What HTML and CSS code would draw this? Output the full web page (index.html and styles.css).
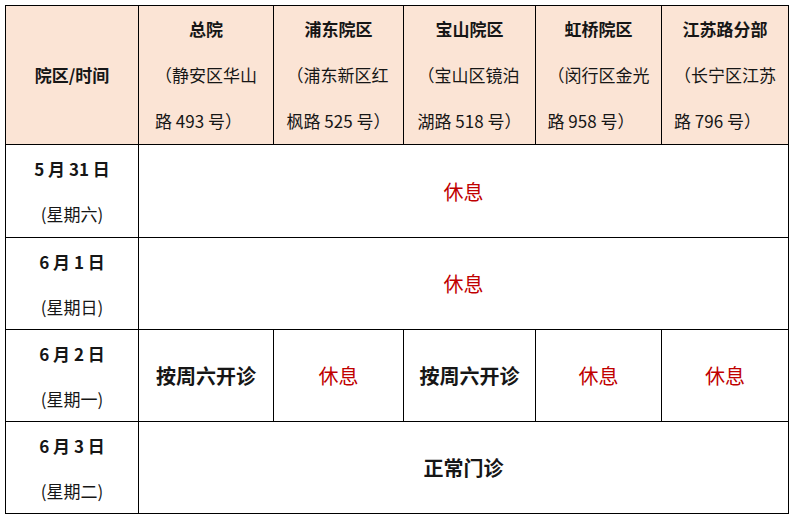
FILE: index.html
```html
<!DOCTYPE html>
<html lang="zh-CN">
<head>
<meta charset="utf-8">
<title>院区门诊安排</title>
<link rel="stylesheet" href="styles.css">
</head>
<body>
<table class="schedule">
  <colgroup>
    <col class="c0"><col class="c1"><col class="c2"><col class="c3"><col class="c4"><col class="c5">
  </colgroup>
  <tr class="head">
    <th class="corner">院区/时间</th>
    <th><div class="name">总院</div><div class="addr">（静安区华山<br>路 493 号）</div></th>
    <th><div class="name">浦东院区</div><div class="addr">（浦东新区红<br>枫路 525 号）</div></th>
    <th><div class="name">宝山院区</div><div class="addr">（宝山区镜泊<br>湖路 518 号）</div></th>
    <th><div class="name">虹桥院区</div><div class="addr">（闵行区金光<br>路 958 号）</div></th>
    <th><div class="name">江苏路分部</div><div class="addr">（长宁区江苏<br>路 796 号）</div></th>
  </tr>
  <tr class="row first">
    <td class="date"><div class="d">5 月 31 日</div><div class="w">(星期六)</div></td>
    <td colspan="5" class="rest">休息</td>
  </tr>
  <tr class="row">
    <td class="date"><div class="d">6 月 1 日</div><div class="w">(星期日)</div></td>
    <td colspan="5" class="rest">休息</td>
  </tr>
  <tr class="row">
    <td class="date"><div class="d">6 月 2 日</div><div class="w">(星期一)</div></td>
    <td class="open">按周六开诊</td>
    <td class="rest">休息</td>
    <td class="open">按周六开诊</td>
    <td class="rest">休息</td>
    <td class="rest">休息</td>
  </tr>
  <tr class="row">
    <td class="date"><div class="d">6 月 3 日</div><div class="w">(星期二)</div></td>
    <td colspan="5" class="open">正常门诊</td>
  </tr>
</table>
</body>
</html>
```

FILE: styles.css
```css
html, body {
  margin: 0;
  padding: 0;
  background: #ffffff;
}
body {
  padding: 5px 0 0 5px;
  font-family: "Noto Sans CJK SC", "Noto Sans", sans-serif;
  color: #161616;
}
.schedule {
  border-collapse: collapse;
  table-layout: fixed;
  width: 783px;
}
.c0 { width: 133px; }
.c1 { width: 135px; }
.c2 { width: 130px; }
.c3 { width: 132px; }
.c4 { width: 126px; }
.c5 { width: 127px; }

.schedule th,
.schedule td {
  border: 1px solid #000;
  padding: 0;
  text-align: center;
  vertical-align: middle;
}
.head th {
  background: #fbe4d5;
  height: 138px;
  font-size: 17px;
  line-height: 46px;
}
.corner {
  font-weight: 700;
}
.name {
  font-weight: 700;
}
.addr {
  display: inline-block;
  text-align: left;
  font-weight: 400;
}
.row td {
  height: 91px;
}
.row.first td {
  height: 92px;
}
.date {
  font-size: 17px;
  line-height: 45px;
}
.date .d {
  font-weight: 700;
}
.date .w {
  font-weight: 400;
}
.rest {
  color: #c00000;
  font-size: 20px;
  font-weight: 400;
}
.open {
  font-size: 20px;
  font-weight: 700;
}
```
